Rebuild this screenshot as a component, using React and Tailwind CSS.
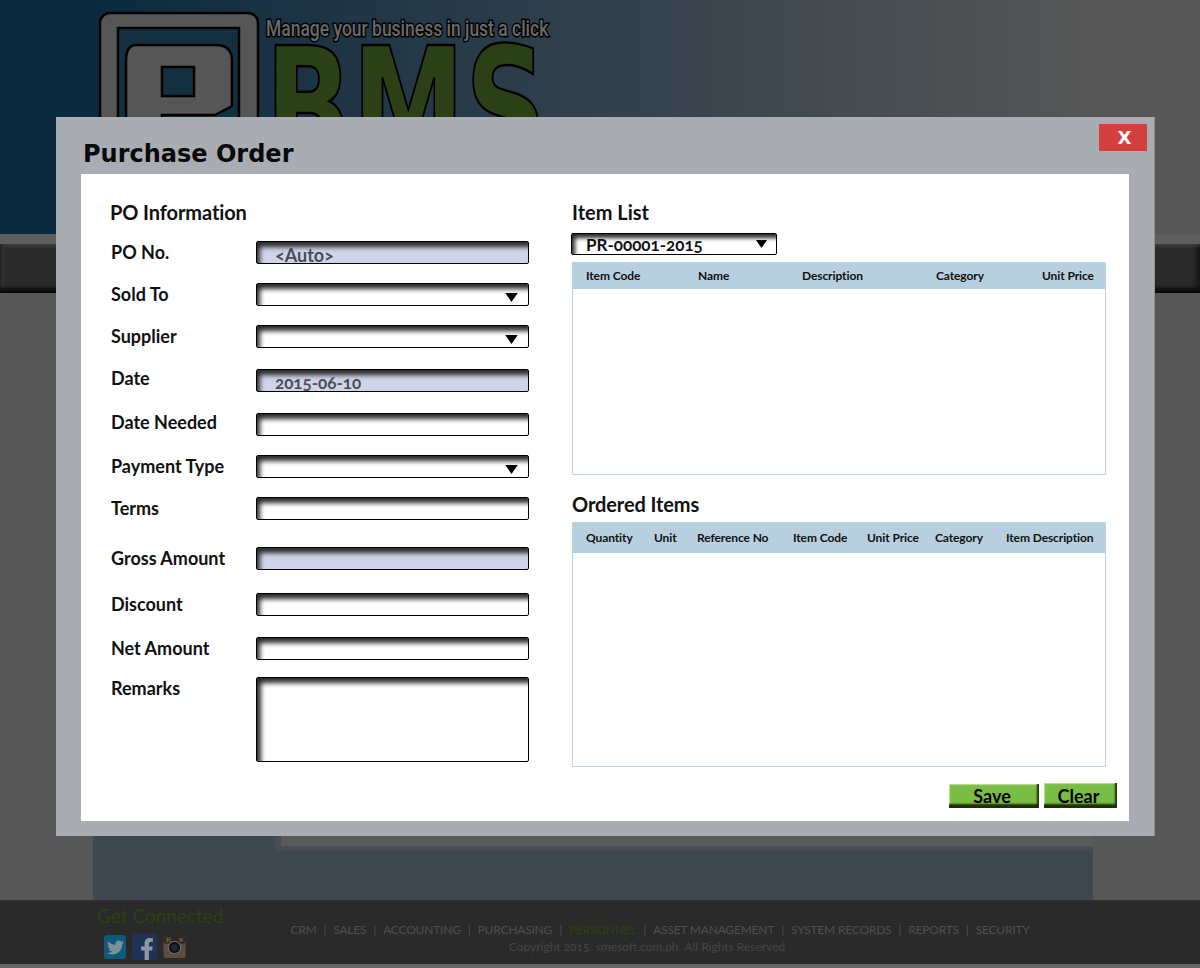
import { FaTwitter, FaFacebookF } from "react-icons/fa";

const body = "font-['Lato','Open_Sans',sans-serif]";

const fields = [
  { label: "PO No.", value: "<Auto>", size: "text-[18px]", filled: true, row: "mt-[16px]", text: "" },
  { label: "Sold To", select: true, row: "mt-[19px]", text: "" },
  { label: "Supplier", select: true, row: "mt-[19px]", text: "" },
  { label: "Date", value: "2015-06-10", size: "text-[17px]", filled: true, row: "mt-[21px]", text: "-translate-y-[2px]" },
  { label: "Date Needed", row: "mt-[21px]", text: "-translate-y-[2px]" },
  { label: "Payment Type", select: true, row: "mt-[19px]", text: "" },
  { label: "Terms", row: "mt-[19px]", text: "" },
  { label: "Gross Amount", filled: true, row: "mt-[27px]", text: "" },
  { label: "Discount", row: "mt-[23px]", text: "" },
  { label: "Net Amount", row: "mt-[21px]", text: "" },
];

const navLinks = ["CRM", "SALES", "ACCOUNTING", "PURCHASING", "PERSONNEL", "ASSET MANAGEMENT", "SYSTEM RECORDS", "REPORTS", "SECURITY"];

function Caret({ className }) {
  return (
    <svg viewBox="0 0 14 10" className={className}>
      <path d="M0 0h14L7 10z" fill="#000" />
    </svg>
  );
}

function Field({ value, size, filled, select }) {
  return (
    <div className={`relative h-[23px] w-[273px] rounded-[2px] border border-black shadow-[inset_4px_6px_5px_-1px_#2b2b2b] ${filled ? "bg-[#cfd4e8]" : "bg-white"}`}>
      {value && <span className={`absolute left-[18px] top-[2px] leading-[22px] font-bold text-[#4b4d58] oldstyle-nums ${size}`}>{value}</span>}
      {select && <Caret className="absolute right-[10px] top-[9px] h-[9px] w-[13px]" />}
    </div>
  );
}

function Logo() {
  return (
    <svg width="460" height="224" viewBox="0 0 460 224" className="ml-[97px]">
      <rect x="3" y="4" width="158" height="218" rx="10" fill="#565656" stroke="#000" strokeWidth="2.5" />
      <rect x="21" y="19" width="121" height="200" fill="#12303f" stroke="#000" strokeWidth="2.5" />
      <path d="M39 36h80q16 0 16 16v45l-17 9H65v116H29V52q0-16 10-16z" fill="#565656" stroke="#000" strokeWidth="2.5" />
      <rect x="65" y="58" width="32" height="29" fill="#12303f" stroke="#000" strokeWidth="2.5" />
      <text transform="translate(169 27) scale(0.795 1)" fontFamily="Roboto, sans-serif" fontWeight="500" fontSize="22" fill="#6a6a6a" stroke="#000" strokeWidth="3" paintOrder="stroke">
        Manage your business in just a click
      </text>
      <text transform="translate(168 157) scale(0.69 1)" fontFamily="'DejaVu Sans', sans-serif" fontWeight="700" fontSize="165" fill="#2c4018" stroke="#000" strokeWidth="2.5">
        BMS
      </text>
    </svg>
  );
}

function Instagram() {
  return (
    <svg viewBox="0 0 24 24" className="h-[24px] w-[23px]">
      <rect x="0.5" y="0.5" width="23" height="23" rx="3" fill="#5e4d3f" />
      <rect x="0.5" y="0.5" width="23" height="8" rx="3" fill="#33241c" />
      <rect x="3" y="2" width="1.2" height="5" fill="#7a2a2a" />
      <rect x="4.4" y="2" width="1.2" height="5" fill="#7a6a2a" />
      <rect x="5.8" y="2" width="1.2" height="5" fill="#2a6a3a" />
      <rect x="7.2" y="2" width="1.2" height="5" fill="#2a4a7a" />
      <rect x="17" y="2.5" width="4" height="4" rx="0.5" fill="#4a5560" />
      <circle cx="12" cy="12.5" r="6.5" fill="#111" stroke="#6d6d6d" strokeWidth="1.2" />
      <circle cx="12" cy="12.5" r="3.4" fill="#1d2a3a" />
    </svg>
  );
}

function Table({ head, cols, columns, h }) {
  return (
    <div className={`w-[534px] rounded-[1px] border border-[#bcd0e0] bg-white ${h}`}>
      <div className={`grid ${cols} ${head} items-center bg-[#b8cfe0] pl-[13px] pr-[11px] text-[12px] font-bold tracking-[-0.1px] text-[#111]`}>
        {columns.map((c) => (
          <span key={c} className="whitespace-nowrap">{c}</span>
        ))}
      </div>
    </div>
  );
}

export default function App() {
  return (
    <div className={`relative h-[968px] w-[1200px] overflow-hidden bg-[#575757] ${body}`}>
      {/* page behind the modal */}
      <header className="h-[234px] overflow-hidden bg-gradient-to-r from-[#0a2a3f] from-[8%] to-[#575757] to-[92%] pt-[9px]">
        <Logo />
      </header>
      <div className="h-[10px] bg-[#5e5e5e]" />
      <div className="h-[49px] bg-[#2a2a2a] shadow-[inset_0_-5px_4px_#080808,inset_0_3px_3px_#3c3c3c,inset_4px_0_4px_#3a3a3a,inset_-4px_0_4px_#1a1a1a]" />
      <div className="h-[1px]" />

      <div className="relative ml-[93px] h-[606px] w-[1000px] bg-[#3f4750]">
        <div className="absolute right-0 bottom-[49px] left-[182px] h-[15px] bg-[#4a4c55] pl-[6px]">
          <div className="h-[10px] w-full bg-[#5a5a5a]" />
        </div>
      </div>

      <footer className="relative h-[64px] border-t border-[#303030] bg-[#2a2a2a]">
        <div className="absolute left-[97px] top-[3px] text-[19px] leading-[24px] text-[#2a4212]">Get Connected</div>
        <div className="absolute left-[104px] top-[33px] flex items-center gap-[6px]">
          <div className="flex h-[24px] w-[22px] items-center justify-center rounded-[3px] bg-[#0f5a78]">
            <FaTwitter className="h-[17px] w-[17px] text-[#7d8f99]" />
          </div>
          <div className="flex h-[26px] w-[25px] items-end justify-end overflow-hidden rounded-[3px] bg-[#1f3358] pr-[3px]">
            <FaFacebookF className="h-[22px] w-[14px] text-[#8d97a8]" />
          </div>
          <Instagram />
        </div>
        <div className="pt-[21px] text-center text-[12px] leading-[16px] text-[#4f4f4f]">
          <div className="ml-[120px] flex justify-center tracking-[-0.2px]">
            {navLinks.map((l, i) => (
              <span key={l} className="whitespace-nowrap">
                {i > 0 && <span className="mx-[7px]">|</span>}
                <span className={l === "PERSONNEL" ? "text-[#2a4212]" : ""}>{l}</span>
              </span>
            ))}
          </div>
          <div className="mt-[1px] ml-[94px] whitespace-pre text-[#454545] oldstyle-nums">Copyright 2015  smesoft.com.ph  All Rights Reserved</div>
        </div>
      </footer>
      <div className="h-[4px] bg-[#666666]" />

      {/* modal */}
      <div className="absolute left-[56px] top-[117px] h-[719px] w-[1099px] border-r border-[#8d8f95] bg-[#a9acb3]">
        <div className="flex h-[57px] items-end pb-[6px] pl-[27px]">
          <h1 className="font-['DejaVu_Sans',sans-serif] text-[24px] leading-[28px] font-bold text-[#0a0a0a]">Purchase Order</h1>
          <button className="absolute right-[7px] top-[7px] flex h-[27px] w-[48px] items-center justify-center bg-[#d33f3f] pl-[3px] font-['DejaVu_Sans',sans-serif] text-[18px] font-bold text-white">X</button>
        </div>
        <div className="mx-[25px] flex h-[647px] w-[1048px] bg-white pt-[25px]">
          {/* left column */}
          <div className="w-[491px] pl-[29px]">
            <h2 className="text-[20px] leading-[26px] font-bold tracking-[-0.1px] text-[#111]">PO Information</h2>
            <div className="pl-[1px]">
              {fields.map((f) => (
                <div key={f.label} className={`flex items-center ${f.row}`}>
                  <span className={`w-[145px] text-[18px] leading-[23px] font-bold text-[#111] ${f.text}`}>{f.label}</span>
                  <Field value={f.value} size={f.size} filled={f.filled} select={f.select} />
                </div>
              ))}
              <div className="mt-[17px] flex items-start">
                <span className="w-[145px] text-[18px] leading-[23px] font-bold text-[#111]">Remarks</span>
                <div className="h-[85px] w-[273px] rounded-[2px] border border-black bg-white shadow-[inset_5px_6px_5px_-1px_#2b2b2b]" />
              </div>
            </div>
          </div>

          {/* right column */}
          <div className="w-[534px]">
            <h2 className="text-[20px] leading-[26px] font-bold text-[#111]">Item List</h2>
            <div className="relative mt-[8px] ml-[-1px] h-[22px] w-[206px] rounded-[2px] border border-black bg-white pl-[14px] text-[17px] leading-[22px] font-bold text-[#111] shadow-[inset_4px_5px_4px_-1px_#2b2b2b] oldstyle-nums">
              PR-00001-2015
              <Caret className="absolute right-[8px] top-[6px] h-[8px] w-[13px]" />
            </div>
            <div className="mt-[7px]">
              <Table
                h="h-[213px]"
                head="h-[26px]"
                cols="grid-cols-[112px_104px_134px_106px_auto]"
                columns={["Item Code", "Name", "Description", "Category", "Unit Price"]}
              />
            </div>
            <h2 className="mt-[16px] text-[20px] leading-[26px] font-bold tracking-[-0.1px] text-[#111]">Ordered Items</h2>
            <div className="mt-[5px]">
              <Table
                h="h-[245px]"
                head="h-[30px]"
                cols="grid-cols-[68px_43px_96px_74px_68px_71px_auto]"
                columns={["Quantity", "Unit", "Reference No", "Item Code", "Unit Price", "Category", "Item Description"]}
              />
            </div>
            <div className="mt-[16px] ml-[377px] flex w-[168px] items-end gap-[5px]">
              <button className="h-[24px] w-[90px] bg-[#7abd45] pr-[4px] text-[18px] leading-[24px] font-bold text-black shadow-[inset_-2px_-4px_2px_#1d3008,inset_1px_1px_1px_#bfe09f]">Save</button>
              <button className="h-[25px] w-[73px] bg-[#7abd45] pr-[4px] pt-[1px] text-[18px] leading-[25px] font-bold text-black shadow-[inset_-2px_-4px_2px_#1d3008,inset_1px_1px_1px_#bfe09f]">Clear</button>
            </div>
          </div>
        </div>
      </div>
    </div>
  );
}
